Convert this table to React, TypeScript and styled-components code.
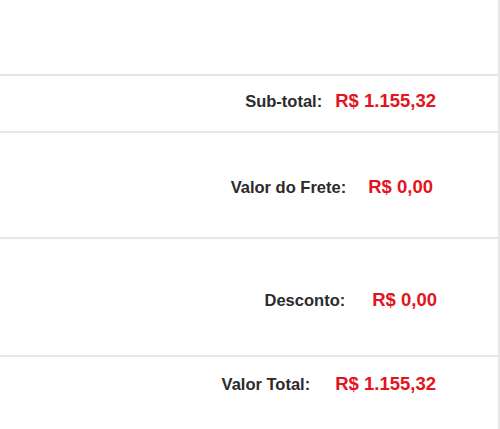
import React from "react";
import styled, { createGlobalStyle } from "styled-components";

const GlobalStyle = createGlobalStyle`
  html, body {
    margin: 0;
    padding: 0;
    background: #ffffff;
    font-family: "Liberation Sans", Arial, sans-serif;
  }
`;

const Panel = styled.div`
  width: 500px;
  height: 429px;
  box-sizing: border-box;
  border-right: 2px solid #e6e6e6;
  display: flex;
  flex-direction: column;
  overflow: hidden;
`;

const TopSpace = styled.div`
  height: 74px;
  flex-shrink: 0;
  border-bottom: 2px solid #e6e6e6;
`;

const Row = styled.div<{ $height: number; $top: number; $right: number; $gap: number; $last?: boolean }>`
  height: ${(p) => p.$height}px;
  flex-shrink: 0;
  box-sizing: border-box;
  padding-top: ${(p) => p.$top}px;
  padding-right: ${(p) => p.$right}px;
  display: flex;
  justify-content: flex-end;
  align-items: baseline;
  gap: ${(p) => p.$gap}px;
  border-bottom: ${(p) => (p.$last ? "none" : "2px solid #e6e6e6")};
`;

const Label = styled.span`
  font-size: 16.5px;
  font-weight: 700;
  line-height: 20px;
  color: #2b2b2b;
`;

const Value = styled.span`
  font-size: 18.5px;
  font-weight: 700;
  line-height: 20px;
  color: #e3141e;
`;

const rows = [
  { label: "Sub-total:", value: "R$ 1.155,32", height: 57, top: 15, right: 62, gap: 13 },
  { label: "Valor do Frete:", value: "R$ 0,00", height: 106, top: 44, right: 65, gap: 22 },
  { label: "Desconto:", value: "R$ 0,00", height: 118, top: 51, right: 61, gap: 27 },
  { label: "Valor Total:", value: "R$ 1.155,32", height: 72, top: 17, right: 62, gap: 25 },
];

export default function App() {
  return (
    <>
      <GlobalStyle />
      <Panel>
        <TopSpace />
        {rows.map((r, i) => (
          <Row
            key={r.label}
            $height={r.height}
            $top={r.top}
            $right={r.right}
            $gap={r.gap}
            $last={i === rows.length - 1}
          >
            <Label>{r.label}</Label>
            <Value>{r.value}</Value>
          </Row>
        ))}
      </Panel>
    </>
  );
}
